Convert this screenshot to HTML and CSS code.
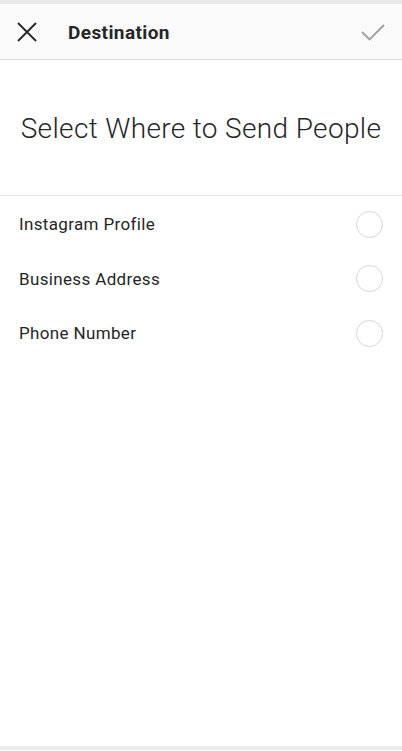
FILE: index.html
```html
<!DOCTYPE html>
<html lang="en">

<head>
    <meta charset="UTF-8">
    <meta name="viewport" content="width=device-width, initial-scale=1.0">
    <title>Destination</title>
    <link rel="stylesheet" href="styles.css">
</head>

<body>
    <div class="status"></div>

    <header class="topbar">
        <span class="close">
            <svg width="22" height="22" viewBox="0 0 22 22">
                <path d="M2 2 L20 20 M20 2 L2 20" stroke="#262626" stroke-width="1.8" fill="none"/>
            </svg>
        </span>
        <h1>Destination</h1>
        <span class="done">
            <svg width="26" height="20" viewBox="0 0 26 20">
                <path d="M2 9 L9.5 16.5 L24 2" stroke="#a0a0a0" stroke-width="1.8" fill="none"/>
            </svg>
        </span>
    </header>

    <main>
        <section class="intro">
            <h2>Select Where to Send People</h2>
        </section>

        <ul class="options">
            <li><span>Instagram Profile</span><i class="radio"></i></li>
            <li><span>Business Address</span><i class="radio"></i></li>
            <li><span>Phone Number</span><i class="radio"></i></li>
        </ul>
    </main>

    <footer class="bottom"></footer>
</body>

</html>
```

FILE: styles.css
```css
body {
    margin: 0;
    min-height: 751px;
    display: grid;
    grid-template-rows: auto auto 1fr auto;
    background-color: #ffffff;
    font-family: Roboto, "Liberation Sans", sans-serif;
    color: #262626;
}

.status {
    height: 4px;
    background-color: #e8e8e8;
}

.topbar {
    height: 55px;
    display: flex;
    align-items: center;
    background-color: #fafafa;
    border-bottom: 1px solid #dbdbdb;
}

.close {
    display: flex;
    margin-left: 16px;
    margin-top: 1px;
}

.topbar h1 {
    margin: 2px 0 0 30px;
    font-size: 19px;
    font-weight: 700;
    letter-spacing: 0.4px;
    flex: 1;
}

.done {
    display: flex;
    margin-right: 16px;
    margin-top: 2px;
}

main {
    display: block;
}

.intro {
    height: 135px;
    display: flex;
    align-items: center;
    justify-content: center;
    border-bottom: 1px solid #e6e6e6;
}

.intro h2 {
    margin: 2px 0 0;
    font-size: 28px;
    font-weight: 300;
    letter-spacing: 0.35px;
}

.options {
    list-style: none;
    margin: 0;
    padding: 1px 0 0;
}

.options li {
    height: 54.5px;
    display: flex;
    align-items: center;
    justify-content: space-between;
    padding: 0 19px 0 19px;
    font-size: 17px;
    letter-spacing: 0.35px;
}

.radio {
    width: 25px;
    height: 25px;
    border: 1.5px solid #d4d4d4;
    border-radius: 50%;
}

.bottom {
    height: 4px;
    margin-bottom: 1px;
    background-color: #ececec;
}
```
